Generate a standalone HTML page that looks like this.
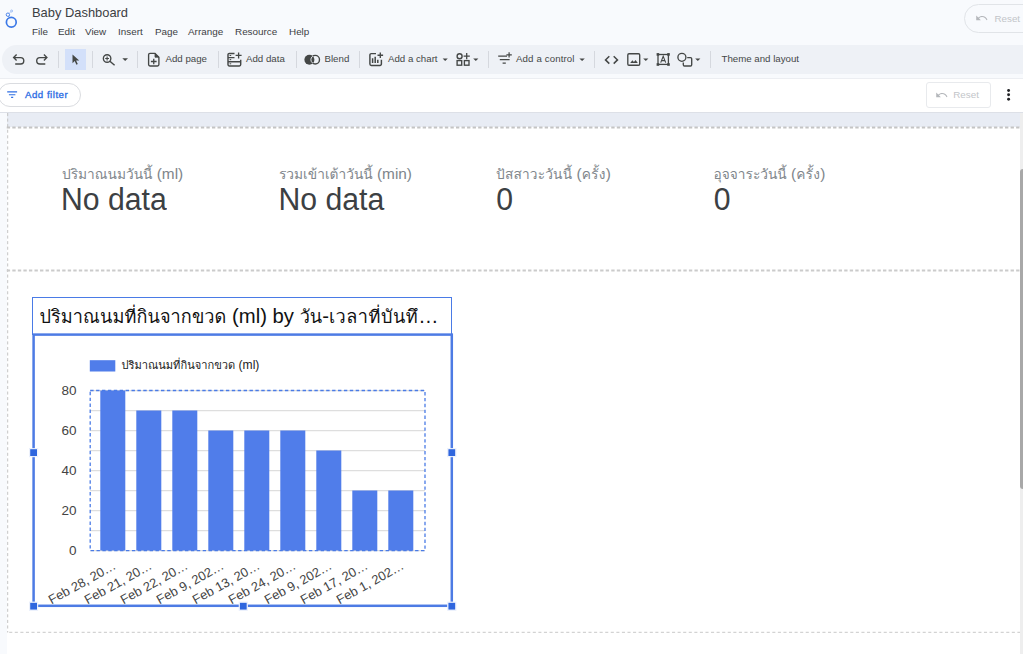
<!DOCTYPE html>
<html lang="th">
<head>
<meta charset="utf-8">
<title>Baby Dashboard</title>
<style>
*{box-sizing:border-box;margin:0;padding:0}
html,body{width:1023px;height:654px;overflow:hidden;background:#fff}
body{position:relative;font-family:"Liberation Sans","Loma","Noto Sans Thai",sans-serif;color:#3c4043}
.abs{position:absolute}
#hdr{left:0;top:0;width:1023px;height:78px;background:#f8fafd}
#title{left:32px;top:4px;font-size:12.9px;line-height:18px;color:#3c4043;white-space:nowrap}
.menu{top:24.8px;font-size:9.9px;line-height:14px;color:#3c4043;white-space:nowrap}
#pill{left:2px;top:45px;width:1040px;height:29px;border-radius:14.5px;background:#eef1f6}
#sel{left:65px;top:49px;width:21px;height:21px;background:#d3e0fa}
.sep{top:51px;width:1px;height:17px;background:#d5d8de}
.tb{top:51.8px;font-size:9.7px;line-height:14px;color:#444746;white-space:nowrap}
#fbar{left:0;top:77.6px;width:1023px;height:34.4px;background:#fff;border-top:1px solid #eceef2}
#chip{left:-2px;top:83px;width:82.5px;height:23.5px;border:1px solid #dadce0;border-radius:12px;background:#fff}
#chiptxt{left:25px;top:88.3px;font-size:9.7px;letter-spacing:0.5px;line-height:14px;color:#2f6fe4;-webkit-text-stroke:0.35px #2f6fe4;white-space:nowrap}
#canvas{left:0;top:112.2px;width:1023px;height:542px;background:#f8fafd;border-top:1px solid #dde0e7}
#page{left:7px;top:112px;width:1013px;height:542px;background:#fff}
#band{left:7px;top:112.2px;width:1013px;height:15.3px;background:#e8ecf4;border-top:1px solid #dde0e7}
.sc-l{top:164px;font-size:15.4px;line-height:20px;color:#80868b;white-space:nowrap}
.th{font-size:0.892em}
.sc-v{top:182px;font-size:30.2px;line-height:36px;color:#3c4043;white-space:nowrap;transform:scaleY(1.055);transform-origin:0 28.3px}
</style>
</head>
<body>
<div id="hdr" class="abs"></div>
<svg class="abs" style="left:3px;top:7px" width="18" height="24" viewBox="3 7 18 24" fill="none" stroke="#3b78e7"><circle cx="11.3" cy="22.3" r="4.9" stroke-width="1.7"/><circle cx="7.9" cy="14.7" r="1.7" stroke-width="0.9"/><circle cx="11.6" cy="11" r="1" stroke-width="0.7" stroke="#7da7f0"/><path d="M8.7 16.3 L9.7 17.7" stroke-width="0.9"/><path d="M9.2 13.4 L10.7 11.8" stroke-width="0.6" stroke="#7da7f0"/></svg>
<div id="title" class="abs">Baby Dashboard</div>
<div class="abs menu" style="left:32px">File</div>
<div class="abs menu" style="left:58px">Edit</div>
<div class="abs menu" style="left:85px">View</div>
<div class="abs menu" style="left:118px">Insert</div>
<div class="abs menu" style="left:155px">Page</div>
<div class="abs menu" style="left:188px">Arrange</div>
<div class="abs menu" style="left:235px">Resource</div>
<div class="abs menu" style="left:289px">Help</div>
<div id="pill" class="abs"></div>
<div id="sel" class="abs"></div>

<!-- toolbar icons -->
<svg class="abs" style="left:0;top:44px" width="1023" height="32" viewBox="0 44 1023 32" fill="none" stroke="#444746" stroke-width="1.35" stroke-linecap="butt" stroke-linejoin="miter">
  <!-- undo -->
  <path d="M16.6 54.6 L13.6 57.6 L16.6 60.6 M13.9 57.6 H20.6 A3.2 3.2 0 0 1 20.6 64 H15.2"/>
  <!-- redo -->
  <path d="M43.9 54.6 L46.9 57.6 L43.9 60.6 M46.6 57.6 H39.9 A3.2 3.2 0 0 0 39.9 64 H45.3"/>
  <!-- pointer -->
  <path d="M72.5 54.6 V63.2 L74.7 61.1 L76.4 64.7 L77.8 64 L76.1 60.5 L79.2 60.4 Z" fill="#444746" stroke="none"/>
  <!-- zoom -->
  <circle cx="107.1" cy="58.5" r="3.75"/>
  <path d="M109.9 61.3 L114.6 65.3" stroke-width="1.5"/>
  <path d="M105.2 58.5 H109 M107.1 56.6 V60.4" stroke-width="1.1"/>
  <!-- add page -->
  <path d="M155 53.3 H150 A1.4 1.4 0 0 0 148.6 54.7 V64.6 A1.4 1.4 0 0 0 150 66 H157.5 A1.4 1.4 0 0 0 158.9 64.6 V57.2 Z"/>
  <path d="M155 53.3 V57.2 H158.9" fill="#444746" stroke-width="0.8"/>
  <path d="M150.9 61.5 H156.6 M153.75 58.7 V64.3" stroke-width="1.3"/>
  <!-- add data -->
  <path stroke-width="1.45" d="M234.5 53.4 H229.3 A1.3 1.3 0 0 0 228 54.7 V64.6 A1.3 1.3 0 0 0 229.3 65.9 H239.4 A1.3 1.3 0 0 0 240.7 64.6 V59.8"/>
  <path d="M228 57.6 H234.5 M228 61.7 H240.7"/>
  <path d="M229.6 55.5 H231.2 M229.6 59.65 H231.2 M229.6 63.8 H231.2" stroke-width="1"/>
  <path d="M235.6 55.4 H241.6 M238.6 52.4 V58.4" stroke-width="1.3"/>
  <!-- blend -->
  <clipPath id="lc"><circle cx="309.4" cy="59.7" r="5"/></clipPath>
  <circle cx="309.4" cy="59.7" r="5" fill="#444746" stroke="none"/>
  <circle cx="315.2" cy="59.7" r="4.3" fill="#eef1f6" stroke-width="1.4"/>
  <g clip-path="url(#lc)"><circle cx="315.2" cy="59.7" r="4.3" fill="#444746" stroke="#dfe3ea" stroke-width="1"/></g>
  <!-- add chart -->
  <path d="M376 53.6 H371.3 A1.4 1.4 0 0 0 369.9 55 V64 A1.4 1.4 0 0 0 371.3 65.4 H380 A1.4 1.4 0 0 0 381.4 64 V59.8" stroke-width="1.45"/>
  <path d="M372.6 58.3 V63 M375.2 56.7 V63 M377.8 59.8 V63" stroke-width="1.5"/>
  <path d="M377.5 55.2 H383.1 M380.3 52.4 V58" stroke-width="1.35"/>
  <!-- community viz -->
  <circle cx="459.6" cy="56.2" r="2.5"/>
  <rect x="457.1" y="60.6" width="4.6" height="4.6"/>
  <rect x="464.4" y="60.6" width="4.6" height="4.6"/>
  <path d="M463.6 56.1 H469.8 M466.7 53 V59.2" stroke-width="1.3"/>
  <!-- add control -->
  <path d="M498.2 56.1 H507 M499.8 59.6 H509.6 M502.6 63.2 H505.8" stroke-width="1.3"/>
  <path d="M506.4 54.9 H511.8 M509.1 52.2 V57.6" stroke-width="1.2"/>
  <!-- code -->
  <path d="M609.3 56.2 L605.5 59.9 L609.3 63.6 M613.7 56.2 L617.5 59.9 L613.7 63.6" stroke-width="1.5"/>
  <!-- image -->
  <rect x="627.8" y="53.7" width="11.9" height="11.5" rx="1.2"/>
  <path d="M630.2 62.9 L632.4 60.2 L633.9 62 L635.6 59.9 L637.8 62.9 Z" fill="#444746" stroke="none"/>
  <!-- text box -->
  <rect x="658" y="54.5" width="10.4" height="9.9" stroke-width="1.3"/>
  <rect x="656.6" y="53.1" width="2.6" height="2.6" fill="#444746" stroke="none"/>
  <rect x="667.2" y="53.1" width="2.6" height="2.6" fill="#444746" stroke="none"/>
  <rect x="656.6" y="63.2" width="2.6" height="2.6" fill="#444746" stroke="none"/>
  <rect x="667.2" y="63.2" width="2.6" height="2.6" fill="#444746" stroke="none"/>
  <path d="M660.7 62.6 L663.2 56.2 L665.7 62.6 M661.6 60.6 H664.8" stroke-width="1.1"/>
  <!-- shapes -->
  <circle cx="681.9" cy="57.3" r="4"/>
  <path d="M687.2 57.6 H690.5 A1.2 1.2 0 0 1 691.7 58.8 V64.8 A1.2 1.2 0 0 1 690.5 66 H684.5 A1.2 1.2 0 0 1 683.3 64.8 V62.6"/>
  <!-- dropdown arrows -->
  <g fill="#444746" stroke="none">
    <path d="M122.3 58.2 H128 L125.15 61.1 Z"/>
    <path d="M442.6 58.4 H447.8 L445.2 61.1 Z"/>
    <path d="M473.2 58.4 H478.4 L475.8 61.1 Z"/>
    <path d="M579.4 58.4 H584.8 L582.1 61.1 Z"/>
    <path d="M643.2 58.4 H648.4 L645.8 61.1 Z"/>
    <path d="M695.2 58.4 H700.4 L697.8 61.1 Z"/>
  </g>
</svg>
<div class="abs sep" style="left:58px"></div>
<div class="abs sep" style="left:92px"></div>
<div class="abs sep" style="left:137px"></div>
<div class="abs sep" style="left:217.5px"></div>
<div class="abs sep" style="left:296px"></div>
<div class="abs sep" style="left:359px"></div>
<div class="abs sep" style="left:488px"></div>
<div class="abs sep" style="left:594px"></div>
<div class="abs sep" style="left:710px"></div>
<div class="abs tb" style="left:165.5px">Add page</div>
<div class="abs tb" style="left:246px">Add data</div>
<div class="abs tb" style="left:324.5px">Blend</div>
<div class="abs tb" style="left:388px">Add a chart</div>
<div class="abs tb" style="left:516px;letter-spacing:0.12px">Add a control</div>
<div class="abs tb" style="left:721.5px">Theme and layout</div>
<!-- header reset -->
<div class="abs" style="left:964px;top:4px;width:80px;height:28.5px;border:1px solid #e1e4e8;border-radius:14.5px"></div>
<svg class="abs" style="left:975.2px;top:14.2px" width="13" height="8.36" viewBox="0 0 14 9"><path d="M1.3 1.6 V6.6 H6.3 L4.3 4.6 C5.2 3.8 6.4 3.3 7.7 3.3 C9.9 3.3 11.7 4.7 12.4 6.7 L13.4 6.3 C12.6 3.8 10.3 2.1 7.7 2.1 C6.1 2.1 4.6 2.7 3.5 3.8 Z" fill="#b4b7bb"/></svg>
<div class="abs" style="left:994.5px;top:11.5px;font-size:9.8px;line-height:14px;color:#c2c5c9;white-space:nowrap">Reset</div>
<div id="fbar" class="abs"></div>
<div id="chip" class="abs"></div>
<svg class="abs" style="left:6px;top:89px" width="12" height="10" viewBox="6 89 12 10"><path d="M7.2 91.9 H17.1 M8.9 94.7 H15.4 M11.1 97.4 H13.2" stroke="#2f6fe4" stroke-width="1.15" fill="none"/></svg>
<div id="chiptxt" class="abs">Add filter</div>
<div id="canvas" class="abs"></div>
<div id="page" class="abs"></div>
<div id="band" class="abs"></div>

<!-- canvas guides -->
<svg class="abs" style="left:0;top:112px" width="1023" height="542" viewBox="0 112 1023 542" fill="none">
  <path d="M7.7 113 V632.5" stroke="#c4c4c4" stroke-width="1" stroke-dasharray="3.1 2.47"/>
  <path d="M7.7 632.3 H1020" stroke="#c9c9c9" stroke-width="1" stroke-dasharray="3.1 2.47" stroke-dashoffset="-1.5"/>
  <path d="M6.75 127.5 H1020" stroke="#c4c4c4" stroke-width="2" stroke-dasharray="3.35 2.196"/>
  <path d="M6.75 270.5 H1020" stroke="#cbcbcb" stroke-width="2" stroke-dasharray="3.35 2.196"/>
</svg>
<!-- scrollbar -->
<div class="abs" style="left:1020px;top:113px;width:3px;height:541px;background:#eeeeee"></div>
<div class="abs" style="left:1020px;top:169px;width:6px;height:320px;background:#a8a8a8;border-radius:3px"></div>
<!-- filter bar reset + kebab -->
<div class="abs" style="left:926px;top:82px;width:65.2px;height:25.8px;border:1px solid #e8eaed;border-radius:3px;background:#fff"></div>
<svg class="abs" style="left:934.6px;top:91.2px" width="13" height="8.36" viewBox="0 0 14 9"><path d="M1.3 1.6 V6.6 H6.3 L4.3 4.6 C5.2 3.8 6.4 3.3 7.7 3.3 C9.9 3.3 11.7 4.7 12.4 6.7 L13.4 6.3 C12.6 3.8 10.3 2.1 7.7 2.1 C6.1 2.1 4.6 2.7 3.5 3.8 Z" fill="#b4b7bb"/></svg>
<div class="abs" style="left:953.3px;top:88.2px;font-size:9.8px;line-height:14px;color:#c2c5c9;white-space:nowrap">Reset</div>
<svg class="abs" style="left:1005px;top:87px" width="8" height="16" viewBox="1005 87 8 16"><circle cx="1008.6" cy="90.5" r="1.45" fill="#202124"/><circle cx="1008.6" cy="94.8" r="1.45" fill="#202124"/><circle cx="1008.6" cy="99.2" r="1.45" fill="#202124"/></svg>
<!-- scorecards -->
<div class="abs sc-l" style="left:62px"><span class="th">ปริมาณนมวันนี้</span> (ml)</div>
<div class="abs sc-v" style="left:61px">No data</div>
<div class="abs sc-l" style="left:279px"><span class="th">รวมเข้าเต้าวันนี้</span> (min)</div>
<div class="abs sc-v" style="left:278.5px">No data</div>
<div class="abs sc-l" style="left:496px"><span class="th" style="letter-spacing:0.17px">ปัสสาวะวันนี้</span> (<span class="th" style="letter-spacing:0.3px">ครั้ง</span>)</div>
<div class="abs sc-v" style="left:496.3px">0</div>
<div class="abs sc-l" style="left:713.5px"><span class="th">อุจจาระวันนี้</span> (<span class="th" style="letter-spacing:0.3px">ครั้ง</span>)</div>
<div class="abs sc-v" style="left:713.8px">0</div>
<!-- chart -->
<div class="abs" style="left:32.4px;top:296.8px;width:420px;height:38px;border:1.1px solid #4a7be6;background:#fff"></div>
<div class="abs" id="ctitle" style="left:39.5px;top:302.3px;font-size:20.3px;line-height:28px;color:#111;white-space:nowrap"><span class="th" style="letter-spacing:0.08px">ปริมาณนมที่กินจากขวด</span> (ml) by <span class="th">วัน</span>-<span class="th" style="letter-spacing:0.5px">เวลาที่บันทึ</span><span style="letter-spacing:0.3px">…</span></div>
<svg class="abs" style="left:20px;top:325px" width="450" height="295" viewBox="20 325 450 295" font-family="'Liberation Sans','Loma','Noto Sans Thai',sans-serif">
<rect x="33.6" y="334.6" width="418.2" height="271.2" fill="#fff" stroke="#4d7be4" stroke-width="2.5"/>
<path d="M90 550.5 H425" stroke="#dedede" stroke-width="1.25"/>
<path d="M90 530.5 H425" stroke="#dedede" stroke-width="1.25"/>
<path d="M90 510.5 H425" stroke="#dedede" stroke-width="1.25"/>
<path d="M90 490.5 H425" stroke="#dedede" stroke-width="1.25"/>
<path d="M90 470.5 H425" stroke="#dedede" stroke-width="1.25"/>
<path d="M90 450.5 H425" stroke="#dedede" stroke-width="1.25"/>
<path d="M90 430.5 H425" stroke="#dedede" stroke-width="1.25"/>
<path d="M90 410.5 H425" stroke="#dedede" stroke-width="1.25"/>
<path d="M90 390.5 H425" stroke="#dedede" stroke-width="1.25"/>
<rect x="100.3" y="390.5" width="25" height="160.0" fill="#507dea"/>
<rect x="136.3" y="410.5" width="25" height="140.0" fill="#507dea"/>
<rect x="172.3" y="410.5" width="25" height="140.0" fill="#507dea"/>
<rect x="208.3" y="430.5" width="25" height="120.0" fill="#507dea"/>
<rect x="244.3" y="430.5" width="25" height="120.0" fill="#507dea"/>
<rect x="280.3" y="430.5" width="25" height="120.0" fill="#507dea"/>
<rect x="316.3" y="450.5" width="25" height="100.0" fill="#507dea"/>
<rect x="352.3" y="490.5" width="25" height="60.0" fill="#507dea"/>
<rect x="388.3" y="490.5" width="25" height="60.0" fill="#507dea"/>
<rect x="90.2" y="390.5" width="334.8" height="160.2" fill="none" stroke="#4a7be6" stroke-width="1.3" stroke-dasharray="3.4 2.5"/>
<text x="76.5" y="555.2" font-size="13.5" fill="#444" text-anchor="end">0</text>
<text x="76.5" y="515.2" font-size="13.5" fill="#444" text-anchor="end">20</text>
<text x="76.5" y="475.2" font-size="13.5" fill="#444" text-anchor="end">40</text>
<text x="76.5" y="435.2" font-size="13.5" fill="#444" text-anchor="end">60</text>
<text x="76.5" y="395.2" font-size="13.5" fill="#444" text-anchor="end">80</text>
<text transform="translate(116.8 568.3) rotate(-29)" font-size="12.9" fill="#444" text-anchor="end">Feb 28, 20…</text>
<text transform="translate(152.8 568.3) rotate(-29)" font-size="12.9" fill="#444" text-anchor="end">Feb 21, 20…</text>
<text transform="translate(188.8 568.3) rotate(-29)" font-size="12.9" fill="#444" text-anchor="end">Feb 22, 20…</text>
<text transform="translate(224.8 568.3) rotate(-29)" font-size="12.9" fill="#444" text-anchor="end">Feb 9, 202…</text>
<text transform="translate(260.8 568.3) rotate(-29)" font-size="12.9" fill="#444" text-anchor="end">Feb 13, 20…</text>
<text transform="translate(296.8 568.3) rotate(-29)" font-size="12.9" fill="#444" text-anchor="end">Feb 24, 20…</text>
<text transform="translate(332.8 568.3) rotate(-29)" font-size="12.9" fill="#444" text-anchor="end">Feb 9, 202…</text>
<text transform="translate(368.8 568.3) rotate(-29)" font-size="12.9" fill="#444" text-anchor="end">Feb 17, 20…</text>
<text transform="translate(404.8 568.3) rotate(-29)" font-size="12.9" fill="#444" text-anchor="end">Feb 1, 202…</text>
<rect x="89.8" y="360.2" width="25.5" height="11.3" fill="#507dea"/>
<text x="121.4" y="369.4" font-size="12.1" fill="#222"><tspan font-size="11.1">ปริมาณนมที่กินจากขวด</tspan> (ml)</text>
<rect x="29.4" y="448.4" width="8.4" height="8.4" fill="#fff" stroke="#e8eefc" stroke-width="0.8"/>
<rect x="30.2" y="449.2" width="6.8" height="6.8" fill="#2f66de"/>
<rect x="447.6" y="448.4" width="8.4" height="8.4" fill="#fff" stroke="#e8eefc" stroke-width="0.8"/>
<rect x="448.4" y="449.2" width="6.8" height="6.8" fill="#2f66de"/>
<rect x="29.4" y="602.0" width="8.4" height="8.4" fill="#fff" stroke="#e8eefc" stroke-width="0.8"/>
<rect x="30.2" y="602.8" width="6.8" height="6.8" fill="#2f66de"/>
<rect x="239.1" y="602.0" width="8.4" height="8.4" fill="#fff" stroke="#e8eefc" stroke-width="0.8"/>
<rect x="239.9" y="602.8" width="6.8" height="6.8" fill="#2f66de"/>
<rect x="447.6" y="602.0" width="8.4" height="8.4" fill="#fff" stroke="#e8eefc" stroke-width="0.8"/>
<rect x="448.4" y="602.8" width="6.8" height="6.8" fill="#2f66de"/>
</svg>
</body>
</html>
